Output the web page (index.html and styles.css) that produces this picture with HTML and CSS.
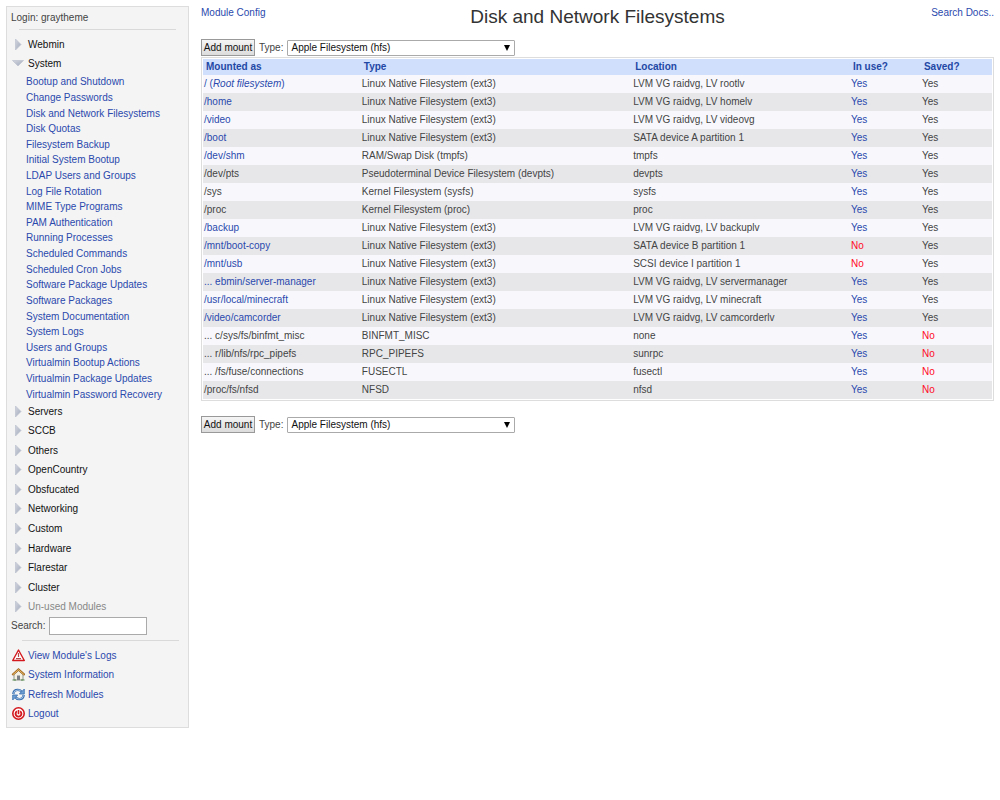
FILE: index.html
```
<!DOCTYPE html>
<html lang="en">
<head>
    <meta charset="UTF-8">
    <meta name="viewport" content="width=device-width, initial-scale=1.0">
    <title>Disk and Network Filesystems</title>
    <link rel="stylesheet" href="styles.css">
</head>
<body>
    <!-- shared arrow shapes -->
    <svg class="defs" aria-hidden="true">
        <defs>
            <linearGradient id="shade" x1="0" y1="0" x2="1" y2="1">
                <stop offset="0" stop-color="#d3d6df"/>
                <stop offset="1" stop-color="#a2a9bc"/>
            </linearGradient>
            <symbol id="closed" viewBox="0 0 12 12"><path d="M3.500 0 9 5.500 3.500 11z" fill="url(#shade)" stroke="#bcc1ce" stroke-width=".7"/></symbol>
            <symbol id="open" viewBox="0 0 12 12"><path d="M.5 2.500h11L6 8z" fill="url(#shade)" stroke="#bcc1ce" stroke-width=".7"/></symbol>
        </defs>
    </svg>

    <nav class="sidebar">
        <div class="login">Login: graytheme</div>
        <hr class="rule">

        <ul class="categories top">
            <li><a href="#"><svg class="arrow"><use href="#closed"/></svg>Webmin</a></li>
            <li><a href="#"><svg class="arrow"><use href="#open"/></svg>System</a></li>
        </ul>
        <ul class="modules">
            <li><a href="#">Bootup and Shutdown</a></li>
            <li><a href="#">Change Passwords</a></li>
            <li><a href="#">Disk and Network Filesystems</a></li>
            <li><a href="#">Disk Quotas</a></li>
            <li><a href="#">Filesystem Backup</a></li>
            <li><a href="#">Initial System Bootup</a></li>
            <li><a href="#">LDAP Users and Groups</a></li>
            <li><a href="#">Log File Rotation</a></li>
            <li><a href="#">MIME Type Programs</a></li>
            <li><a href="#">PAM Authentication</a></li>
            <li><a href="#">Running Processes</a></li>
            <li><a href="#">Scheduled Commands</a></li>
            <li><a href="#">Scheduled Cron Jobs</a></li>
            <li><a href="#">Software Package Updates</a></li>
            <li><a href="#">Software Packages</a></li>
            <li><a href="#">System Documentation</a></li>
            <li><a href="#">System Logs</a></li>
            <li><a href="#">Users and Groups</a></li>
            <li><a href="#">Virtualmin Bootup Actions</a></li>
            <li><a href="#">Virtualmin Package Updates</a></li>
            <li><a href="#">Virtualmin Password Recovery</a></li>
        </ul>
        <ul class="categories rest">
            <li><a href="#"><svg class="arrow"><use href="#closed"/></svg>Servers</a></li>
            <li><a href="#"><svg class="arrow"><use href="#closed"/></svg>SCCB</a></li>
            <li><a href="#"><svg class="arrow"><use href="#closed"/></svg>Others</a></li>
            <li><a href="#"><svg class="arrow"><use href="#closed"/></svg>OpenCountry</a></li>
            <li><a href="#"><svg class="arrow"><use href="#closed"/></svg>Obsfucated</a></li>
            <li><a href="#"><svg class="arrow"><use href="#closed"/></svg>Networking</a></li>
            <li><a href="#"><svg class="arrow"><use href="#closed"/></svg>Custom</a></li>
            <li><a href="#"><svg class="arrow"><use href="#closed"/></svg>Hardware</a></li>
            <li><a href="#"><svg class="arrow"><use href="#closed"/></svg>Flarestar</a></li>
            <li><a href="#"><svg class="arrow"><use href="#closed"/></svg>Cluster</a></li>
            <li><a href="#" class="unused"><svg class="arrow"><use href="#closed"/></svg>Un-used Modules</a></li>
        </ul>

        <form class="search">
            <label for="search">Search:</label>
            <input type="text" id="search">
        </form>
        <hr class="rule">

        <ul class="tools">
            <li><a href="#">
                <svg class="icon" viewBox="0 0 14 14"><path d="M7.500 1 13.300 11.500H1.700z" fill="#fff" stroke="#d3181e" stroke-width="1.400" stroke-linejoin="round"/><path d="M7.500 4v4M5 9.600h5" stroke="#b8474a" stroke-width="1.200"/></svg>
                View Module's Logs</a></li>
            <li><a href="#">
                <svg class="icon" viewBox="0 0 14 14"><path d="M3 6.500V12h9V6.500l-4.500-4z" fill="#f4f0e4" stroke="#7a7d72" stroke-width=".8"/><path d="M1.300 7 7.500 1.500 13.700 7" fill="none" stroke="#a56a25" stroke-width="2.200"/><path d="M2 6.600 7.500 1.700 13 6.600" fill="none" stroke="#e6b763" stroke-width="1"/><path d="M6 7.500h3V12H6z" fill="#7b7f83"/><path d="M1.500 12h3.500M10 12h3.500" stroke="#53894a" stroke-width="1.200"/></svg>
                System Information</a></li>
            <li><a href="#">
                <svg class="icon" viewBox="0 0 14 14"><g fill="none" stroke="#3a70b0" stroke-width="2.400"><path d="M2.300 6.200Q2.700 1.700 7 1.900 9.500 2 11 4.200"/><path d="M12.700 6.800Q12.300 11.300 8 11.100 5.500 11 4 8.800"/></g><g fill="none" stroke="#b9d3ee" stroke-width=".8"><path d="M2.300 5.700Q3 2 7 2 9.300 2 10.800 4"/><path d="M12.700 7.300Q12 11 8 11 5.700 11 4.200 9"/></g><path d="M13.300 1v5H8.300zM1.700 12V7h5z" fill="#6f9fd2" stroke="#3a70b0" stroke-width=".8"/></svg>
                Refresh Modules</a></li>
            <li><a href="#">
                <svg class="icon" viewBox="0 0 14 14"><circle cx="7.500" cy="6.500" r="5.700" fill="#fff" stroke="#d3181e" stroke-width="1.600"/><path d="M5.900 4.300a2.900 2.900 0 1 0 3.200 0" fill="none" stroke="#d3181e" stroke-width="1.900"/><path d="M7.500 3v4.200" stroke="#d3181e" stroke-width="1.600"/></svg>
                Logout</a></li>
        </ul>
    </nav>

    <main class="content">
        <header class="heading">
            <a href="#">Module Config</a>
            <h1>Disk and Network Filesystems</h1>
            <a href="#" class="docs">Search Docs..</a>
        </header>

        <form class="add">
            <button type="button">Add mount</button>
            <label for="type-top">Type:</label>
            <span class="picker">
                <select id="type-top"><option>Apple Filesystem (hfs)</option></select>
                <svg class="caret" viewBox="0 0 6 6"><path d="M0 0h6L3 6z"/></svg>
            </span>
        </form>

        <table class="mounts">
            <thead>
                <tr>
                    <th class="mount">Mounted as</th>
                    <th class="type">Type</th>
                    <th class="location">Location</th>
                    <th class="flag">In use?</th>
                    <th>Saved?</th>
                </tr>
            </thead>
            <tbody>
                <tr><td><a href="#">/ (<i>Root filesystem</i>)</a></td><td>Linux Native Filesystem (ext3)</td><td>LVM VG raidvg, LV rootlv</td><td><a href="#">Yes</a></td><td>Yes</td></tr>
                <tr><td><a href="#">/home</a></td><td>Linux Native Filesystem (ext3)</td><td>LVM VG raidvg, LV homelv</td><td><a href="#">Yes</a></td><td>Yes</td></tr>
                <tr><td><a href="#">/video</a></td><td>Linux Native Filesystem (ext3)</td><td>LVM VG raidvg, LV videovg</td><td><a href="#">Yes</a></td><td>Yes</td></tr>
                <tr><td><a href="#">/boot</a></td><td>Linux Native Filesystem (ext3)</td><td>SATA device A partition 1</td><td><a href="#">Yes</a></td><td>Yes</td></tr>
                <tr><td><a href="#">/dev/shm</a></td><td>RAM/Swap Disk (tmpfs)</td><td>tmpfs</td><td><a href="#">Yes</a></td><td>Yes</td></tr>
                <tr><td>/dev/pts</td><td>Pseudoterminal Device Filesystem (devpts)</td><td>devpts</td><td><a href="#">Yes</a></td><td>Yes</td></tr>
                <tr><td>/sys</td><td>Kernel Filesystem (sysfs)</td><td>sysfs</td><td><a href="#">Yes</a></td><td>Yes</td></tr>
                <tr><td>/proc</td><td>Kernel Filesystem (proc)</td><td>proc</td><td><a href="#">Yes</a></td><td>Yes</td></tr>
                <tr><td><a href="#">/backup</a></td><td>Linux Native Filesystem (ext3)</td><td>LVM VG raidvg, LV backuplv</td><td><a href="#">Yes</a></td><td>Yes</td></tr>
                <tr><td><a href="#">/mnt/boot-copy</a></td><td>Linux Native Filesystem (ext3)</td><td>SATA device B partition 1</td><td><a href="#" class="no">No</a></td><td>Yes</td></tr>
                <tr><td><a href="#">/mnt/usb</a></td><td>Linux Native Filesystem (ext3)</td><td>SCSI device I partition 1</td><td><a href="#" class="no">No</a></td><td>Yes</td></tr>
                <tr><td><a href="#">... ebmin/server-manager</a></td><td>Linux Native Filesystem (ext3)</td><td>LVM VG raidvg, LV servermanager</td><td><a href="#">Yes</a></td><td>Yes</td></tr>
                <tr><td><a href="#">/usr/local/minecraft</a></td><td>Linux Native Filesystem (ext3)</td><td>LVM VG raidvg, LV minecraft</td><td><a href="#">Yes</a></td><td>Yes</td></tr>
                <tr><td><a href="#">/video/camcorder</a></td><td>Linux Native Filesystem (ext3)</td><td>LVM VG raidvg, LV camcorderlv</td><td><a href="#">Yes</a></td><td>Yes</td></tr>
                <tr><td>... c/sys/fs/binfmt_misc</td><td>BINFMT_MISC</td><td>none</td><td><a href="#">Yes</a></td><td class="no">No</td></tr>
                <tr><td>... r/lib/nfs/rpc_pipefs</td><td>RPC_PIPEFS</td><td>sunrpc</td><td><a href="#">Yes</a></td><td class="no">No</td></tr>
                <tr><td>... /fs/fuse/connections</td><td>FUSECTL</td><td>fusectl</td><td><a href="#">Yes</a></td><td class="no">No</td></tr>
                <tr><td>/proc/fs/nfsd</td><td>NFSD</td><td>nfsd</td><td><a href="#">Yes</a></td><td class="no">No</td></tr>
            </tbody>
        </table>

        <form class="add">
            <button type="button">Add mount</button>
            <label for="type-bottom">Type:</label>
            <span class="picker">
                <select id="type-bottom"><option>Apple Filesystem (hfs)</option></select>
                <svg class="caret" viewBox="0 0 6 6"><path d="M0 0h6L3 6z"/></svg>
            </span>
        </form>
    </main>
</body>
</html>
```
FILE: styles.css
```
* { box-sizing: border-box; }

body {
    margin: 0;
    padding: 6px;
    display: flex;
    align-items: flex-start;
    gap: 12px;
    background: #fff;
    color: #444;
    font: 10px/16px "Liberation Sans", Arial, sans-serif;
}

a { color: #2a49ad; text-decoration: none; }
a:hover { text-decoration: underline; }
ul { list-style: none; margin: 0; padding: 0; }
form { margin: 0; }
.defs { position: absolute; width: 0; height: 0; }

/* left menu */
.sidebar {
    flex: 0 0 183px;
    padding: 3px 4px;
    background: #f4f4f4;
    border: 1px solid #ddd;
}

.rule {
    height: 1px;
    margin: 3px 8px 5px;
    border: 0;
    background: #d9d9d9;
}

.categories, .modules, .tools { display: grid; }
.categories li, .modules li, .tools li { display: flex; align-items: center; }
.categories a { display: flex; align-items: center; gap: 4px; }
.tools a { display: flex; align-items: center; gap: 3px; }
.categories a { color: #111; }
.categories a.unused { color: #888; }
.top { min-height: 39px; }
.modules { min-height: 328px; padding-left: 15px; line-height: 15px; }
.rest { min-height: 215px; }
.tools { min-height: 78px; }
.arrow { width: 12px; height: 12px; margin-left: 1px; }
.icon { width: 14px; height: 14px; }

.search { display: flex; align-items: center; gap: 4px; }
.search + .rule { margin: 5px 5px 5px 11px; }
.search input {
    width: 98px;
    height: 18px;
    padding: 0 2px;
    border: 1px solid #aaa;
    background: #fff;
    font: inherit;
}

/* right side */
.content { flex: 1; min-width: 0; }

.heading {
    display: grid;
    grid-template-columns: 1fr auto 1fr;
    align-items: start;
    margin-bottom: 12px;
}
.heading h1 {
    margin: 0;
    color: #333;
    font-size: 19px;
    font-weight: normal;
    line-height: 21px;
}
.heading a { line-height: 14px; }
.docs { text-align: right; }

.add { display: flex; align-items: center; gap: 4px; }
.add button {
    width: 54px;
    height: 17px;
    padding: 0;
    border: 1px solid #999;
    background: linear-gradient(#f5f5f5, #dcdcdc);
    color: #111;
    font: inherit;
    line-height: 15px;
}
.picker { position: relative; }
.picker select {
    display: block;
    width: 228px;
    height: 16px;
    padding: 0 3px;
    appearance: none;
    border: 1px solid #aaa;
    border-radius: 1px;
    background: #fff;
    color: #111;
    font: inherit;
    line-height: 14px;
}
.caret {
    position: absolute;
    top: 5px;
    right: 5px;
    width: 6px;
    height: 6px;
    pointer-events: none;
}

.mounts {
    width: 100%;
    margin: 1px 0 15px;
    padding: 1px;
    table-layout: fixed;
    border: 1px solid #ddd;
    border-spacing: 0;
}
.mounts th {
    height: 16px;
    padding: 0 3px;
    background: #cfdffc;
    color: #1f48a5;
    text-align: left;
}
.mounts td { height: 18px; padding: 0 1px; }
.mounts tbody tr { background: #f8f8fc; }
.mounts tbody tr:nth-child(even) { background: #e7e7ea; }
.mounts .mount { width: 20%; }
.mounts .type { width: 34.4%; }
.mounts .location { width: 27.6%; }
.mounts .flag { width: 9%; }
.mounts .no { color: #ff0a26; }
```
